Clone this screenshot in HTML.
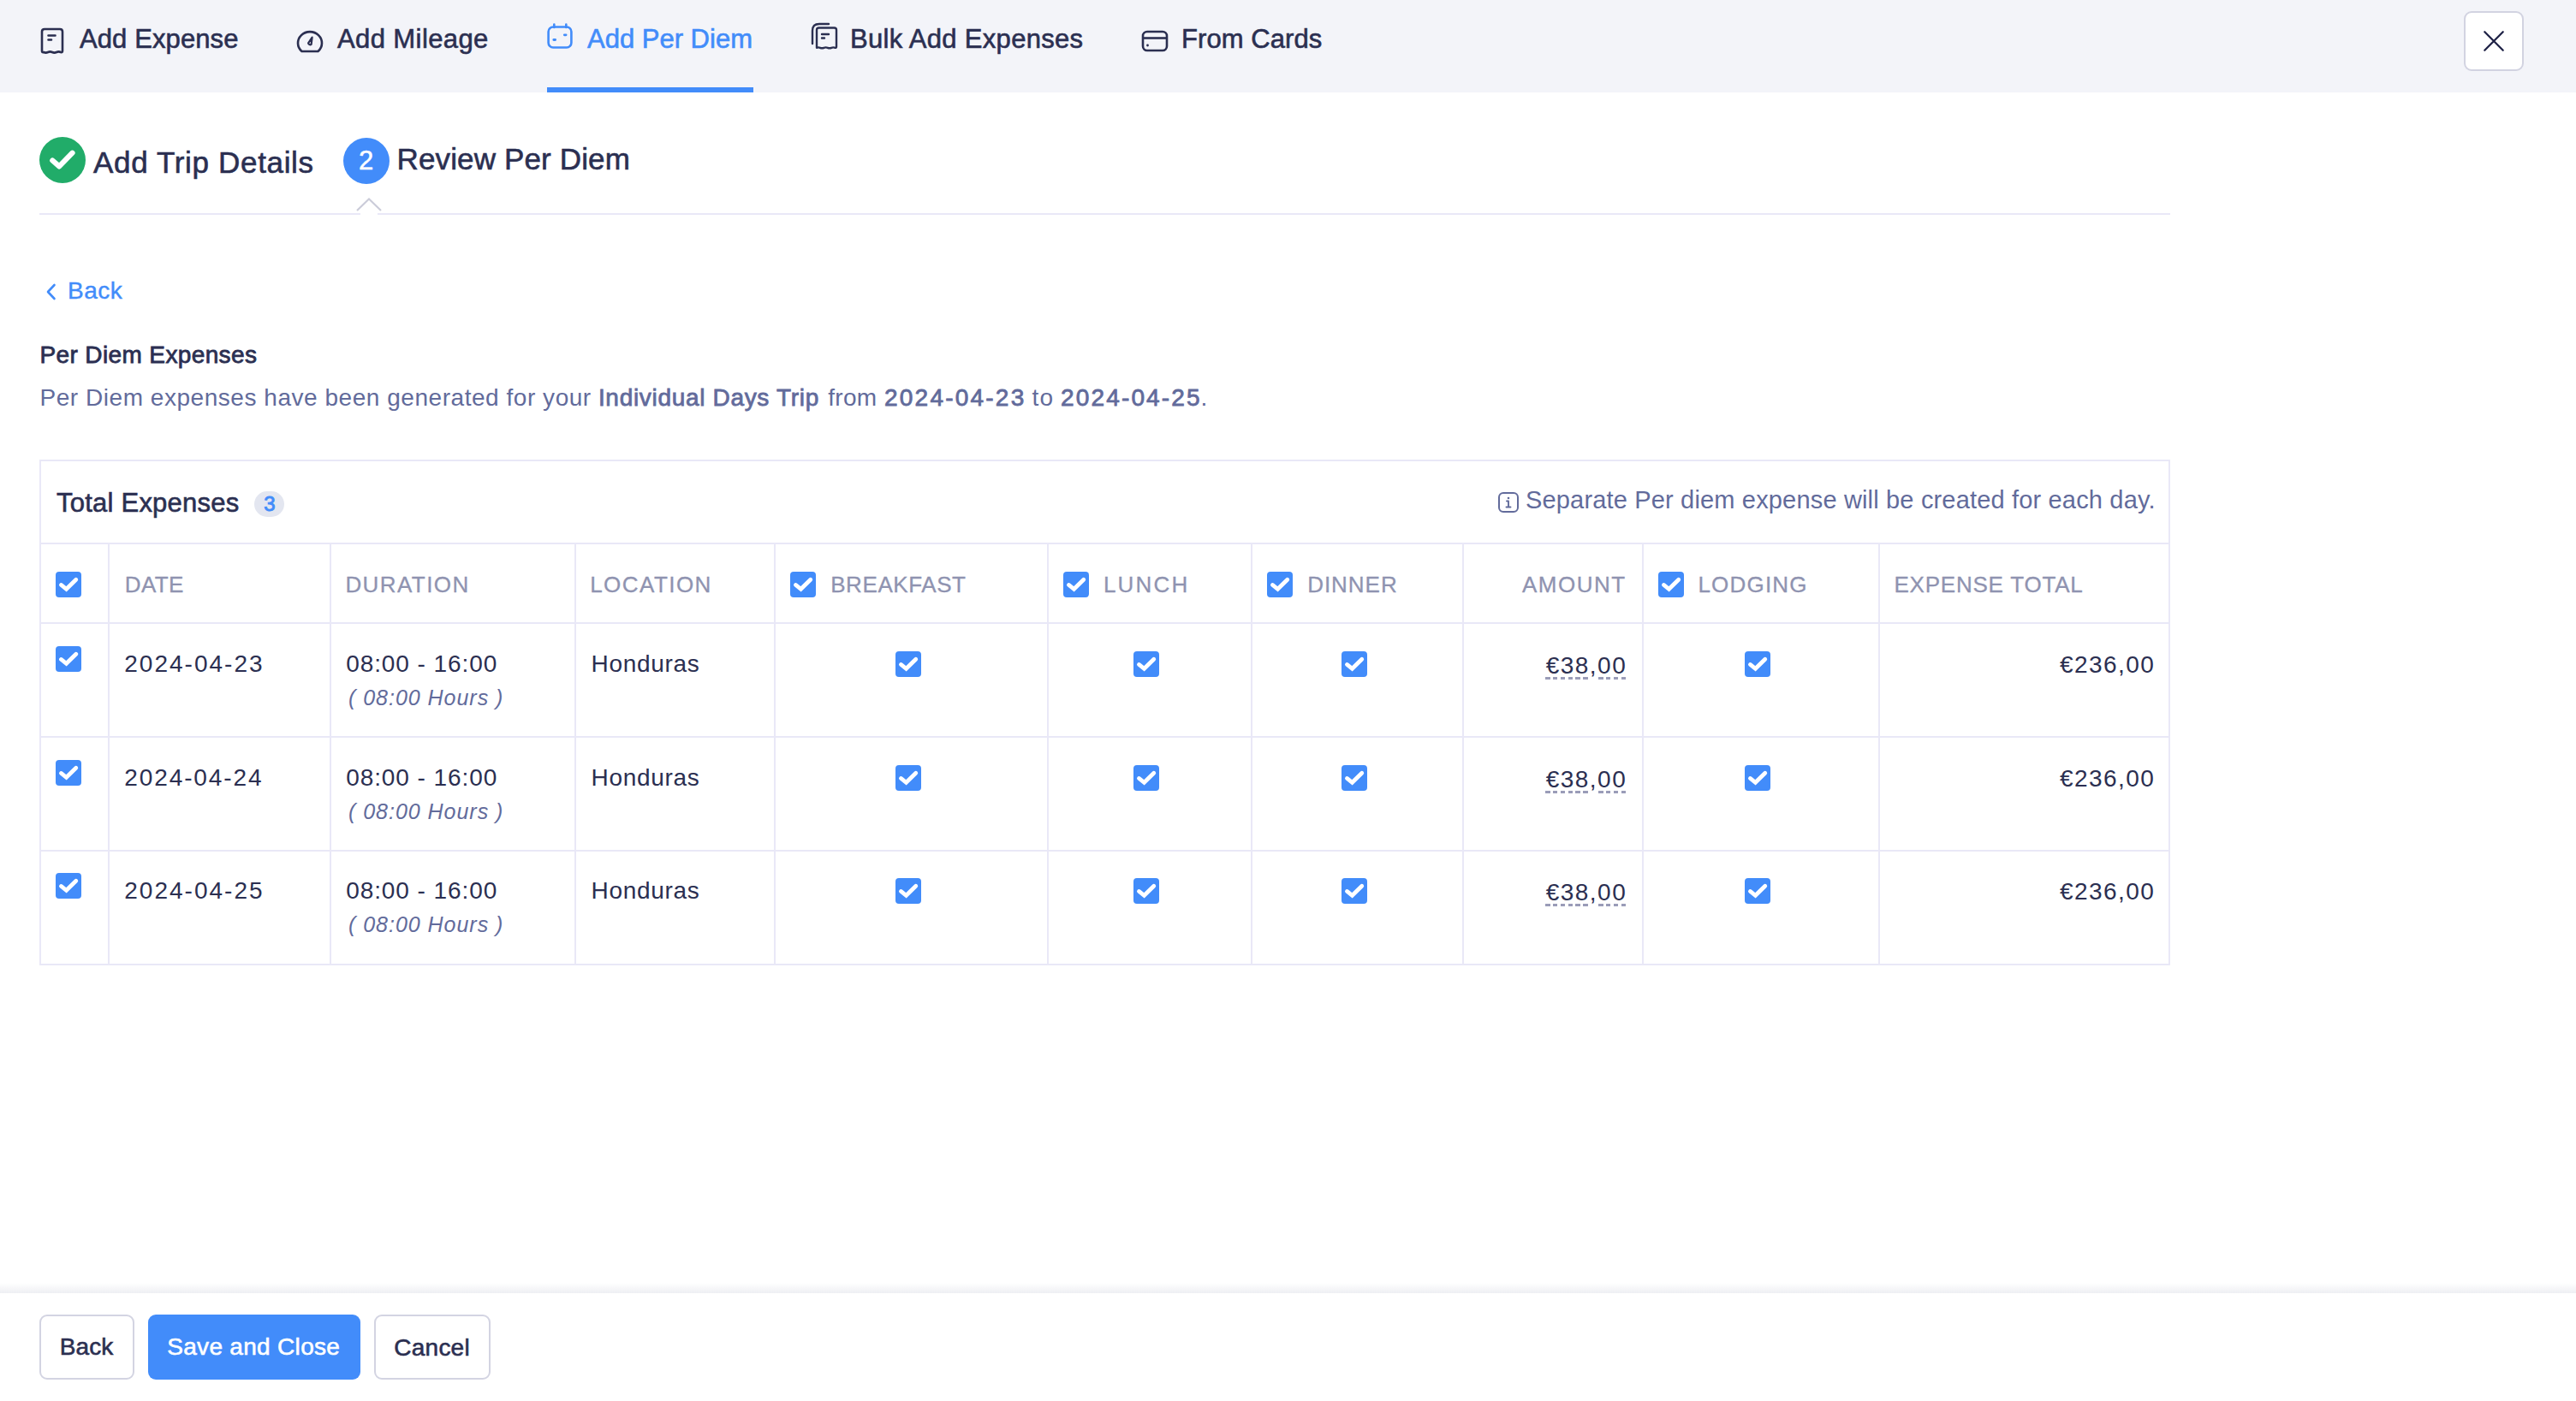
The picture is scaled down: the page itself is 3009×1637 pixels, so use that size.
<!DOCTYPE html>
<html><head><meta charset="utf-8"><title>Add Per Diem</title>
<style>
html,body{margin:0;padding:0;}
body{width:3009px;height:1637px;overflow:hidden;position:relative;background:#fff;font-family:"Liberation Sans",sans-serif;}
.tx{position:absolute;white-space:pre;line-height:1;}
.tx b{font-weight:700;}
.cb{position:absolute;width:30px;height:30px;border-radius:4px;background:#428cfa;}
.cb svg{position:absolute;left:0;top:0;}
.btn{position:absolute;top:1536px;height:72px;border:2px solid #d3d4e2;border-radius:9px;background:#fff;}
</style></head><body>
<div style="position:absolute;left:0;top:0;width:3009px;height:108px;background:#f3f4f9"></div>
<div style="position:absolute;left:639px;top:102px;width:241px;height:6px;background:#428cfa"></div>
<div style="position:absolute;left:2878px;top:13px;width:66px;height:66px;border:2px solid #d2d3e1;border-radius:9px;background:#fff"></div>
<svg style="position:absolute;left:2897px;top:32px" width="32" height="32" viewBox="0 0 32 32"><path d="M5.3 5.3 L26.7 26.7 M26.7 5.3 L5.3 26.7" stroke="#1f2246" stroke-width="2.3" stroke-linecap="round"/></svg>
<svg style="position:absolute;left:46px;top:31px" width="30" height="33" viewBox="0 0 30 33"><path d="M3 28.5 V6 Q3 3 6 3 H24 Q27 3 27 6 V28.5 Q27 30.5 25 30 Q22.5 28.8 20 30 Q17.5 31.3 15 30 Q12.5 28.8 10 30 Q7.5 31.3 5 30 Q3 30.5 3 28.5 Z" fill="none" stroke="#2b2f51" stroke-width="2.6" stroke-linejoin="round"/><path d="M10.5 10.5 H18.5 M10.5 15.5 H14" stroke="#2b2f51" stroke-width="2.6" stroke-linecap="round"/></svg>
<svg style="position:absolute;left:345px;top:33px" width="34" height="30" viewBox="0 0 34 30"><path d="M7.5 27 A14 13.2 0 1 1 26.5 27 Z" fill="none" stroke="#2b2f51" stroke-width="2.6" stroke-linejoin="round"/><path d="M19.6 10.6 L15.1 17.3 A2.3 2.3 0 0 0 18.6 18.9 Z" fill="none" stroke="#2b2f51" stroke-width="2.2" stroke-linejoin="round"/></svg>
<svg style="position:absolute;left:637px;top:25px" width="34" height="34" viewBox="0 0 34 34"><rect x="3.6" y="6.5" width="26.8" height="24" rx="5.5" fill="none" stroke="#428cfa" stroke-width="2.6"/><path d="M10.3 3.5 V7 M24.3 3.5 V7" stroke="#428cfa" stroke-width="2.6" stroke-linecap="round"/><path d="M9.8 21.5 H11.6 M22.3 15.8 H24.1" stroke="#428cfa" stroke-width="2.8" stroke-linecap="round"/></svg>
<svg style="position:absolute;left:946px;top:25px" width="34" height="34" viewBox="0 0 34 34"><path d="M8 29.5 V10 Q8 7.5 10.5 7.5 H28.5 Q31 7.5 31 10 V29.5 Q31 31 29.5 30.8 Q27.3 30 25.2 30.8 Q23 31.8 20.8 30.8 Q18.6 30 16.4 30.8 Q14.2 31.8 12 30.8 Q9.8 30 8 30.8 Z" fill="none" stroke="#2b2f51" stroke-width="2.4" stroke-linejoin="round"/><path d="M3 26 V11 Q3 3 11 3 H22" fill="none" stroke="#2b2f51" stroke-width="2.4" stroke-linecap="round"/><path d="M14 15 H22 M14 19.5 H17" stroke="#2b2f51" stroke-width="2.4" stroke-linecap="round"/></svg>
<svg style="position:absolute;left:1332px;top:34px" width="34" height="28" viewBox="0 0 34 28"><rect x="3" y="3" width="28" height="22" rx="5" fill="none" stroke="#2b2f51" stroke-width="2.6"/><path d="M3 10.5 H31" stroke="#2b2f51" stroke-width="2.6"/><circle cx="8.5" cy="19" r="1.4" fill="#2b2f51"/></svg>
<div style="position:absolute;left:46px;top:160px;width:54px;height:54px;border-radius:50%;background:#21ac69"></div>
<svg style="position:absolute;left:46px;top:160px" width="54" height="54" viewBox="0 0 54 54"><path d="M15.3 27.5 L23.2 34.4 L38.5 18.7" fill="none" stroke="#fff" stroke-width="6.2" stroke-linecap="round" stroke-linejoin="round"/></svg>
<div style="position:absolute;left:401px;top:161px;width:54px;height:54px;border-radius:50%;background:#428cfa"></div>
<div style="position:absolute;left:46px;top:249px;width:375px;height:2px;background:#e9e8f7"></div>
<div style="position:absolute;left:441px;top:249px;width:2094px;height:2px;background:#e9e8f7"></div>
<svg style="position:absolute;left:412px;top:228px" width="38" height="24" viewBox="0 0 38 24"><path d="M5 18 L19 4.5 L33 18" fill="none" stroke="#cbccd9" stroke-width="2.2"/></svg>
<svg style="position:absolute;left:52px;top:329px" width="16" height="24" viewBox="0 0 16 24"><path d="M11.5 4 L4 12 L11.5 20" fill="none" stroke="#428cfa" stroke-width="2.6" stroke-linecap="round" stroke-linejoin="round"/></svg>
<div style="position:absolute;left:46px;top:537px;width:2485px;height:587px;border:2px solid #e9e8f7;background:#fff"></div>
<div style="position:absolute;left:48px;top:634px;width:2485px;height:2px;background:#e9e8f7"></div>
<div style="position:absolute;left:48px;top:727px;width:2485px;height:2px;background:#e9e8f7"></div>
<div style="position:absolute;left:48px;top:860px;width:2485px;height:2px;background:#e9e8f7"></div>
<div style="position:absolute;left:48px;top:993px;width:2485px;height:2px;background:#e9e8f7"></div>
<div style="position:absolute;left:126px;top:636px;width:2px;height:490px;background:#e9e8f7"></div>
<div style="position:absolute;left:385px;top:636px;width:2px;height:490px;background:#e9e8f7"></div>
<div style="position:absolute;left:671px;top:636px;width:2px;height:490px;background:#e9e8f7"></div>
<div style="position:absolute;left:904px;top:636px;width:2px;height:490px;background:#e9e8f7"></div>
<div style="position:absolute;left:1223px;top:636px;width:2px;height:490px;background:#e9e8f7"></div>
<div style="position:absolute;left:1461px;top:636px;width:2px;height:490px;background:#e9e8f7"></div>
<div style="position:absolute;left:1708px;top:636px;width:2px;height:490px;background:#e9e8f7"></div>
<div style="position:absolute;left:1918px;top:636px;width:2px;height:490px;background:#e9e8f7"></div>
<div style="position:absolute;left:2194px;top:636px;width:2px;height:490px;background:#e9e8f7"></div>
<div style="position:absolute;left:297px;top:574px;width:35px;height:30px;border-radius:15px;background:#e3e6f0"></div>
<svg style="position:absolute;left:1749px;top:574px" width="26" height="26" viewBox="0 0 26 26"><rect x="2" y="2" width="22" height="22" rx="5" fill="none" stroke="#626b9b" stroke-width="2"/><path d="M13 11.5 V18.5 M10.5 18.5 H15.5 M11 11.5 H13" stroke="#626b9b" stroke-width="1.9" stroke-linecap="round"/><circle cx="13" cy="8" r="1.3" fill="#626b9b"/></svg>
<div class="cb" style="left:65px;top:668px"><svg width="30" height="30" viewBox="0 0 30 30"><path d="M6.4 15.4 L12.5 20.3 L23.8 9.2" fill="none" stroke="#fff" stroke-width="4.7" stroke-linecap="round" stroke-linejoin="miter"/></svg></div>
<div class="cb" style="left:923px;top:668px"><svg width="30" height="30" viewBox="0 0 30 30"><path d="M6.4 15.4 L12.5 20.3 L23.8 9.2" fill="none" stroke="#fff" stroke-width="4.7" stroke-linecap="round" stroke-linejoin="miter"/></svg></div>
<div class="cb" style="left:1242px;top:668px"><svg width="30" height="30" viewBox="0 0 30 30"><path d="M6.4 15.4 L12.5 20.3 L23.8 9.2" fill="none" stroke="#fff" stroke-width="4.7" stroke-linecap="round" stroke-linejoin="miter"/></svg></div>
<div class="cb" style="left:1480px;top:668px"><svg width="30" height="30" viewBox="0 0 30 30"><path d="M6.4 15.4 L12.5 20.3 L23.8 9.2" fill="none" stroke="#fff" stroke-width="4.7" stroke-linecap="round" stroke-linejoin="miter"/></svg></div>
<div class="cb" style="left:1937px;top:668px"><svg width="30" height="30" viewBox="0 0 30 30"><path d="M6.4 15.4 L12.5 20.3 L23.8 9.2" fill="none" stroke="#fff" stroke-width="4.7" stroke-linecap="round" stroke-linejoin="miter"/></svg></div>
<div class="cb" style="left:65px;top:755px"><svg width="30" height="30" viewBox="0 0 30 30"><path d="M6.4 15.4 L12.5 20.3 L23.8 9.2" fill="none" stroke="#fff" stroke-width="4.7" stroke-linecap="round" stroke-linejoin="miter"/></svg></div>
<div class="cb" style="left:1046px;top:761px"><svg width="30" height="30" viewBox="0 0 30 30"><path d="M6.4 15.4 L12.5 20.3 L23.8 9.2" fill="none" stroke="#fff" stroke-width="4.7" stroke-linecap="round" stroke-linejoin="miter"/></svg></div>
<div class="cb" style="left:1324px;top:761px"><svg width="30" height="30" viewBox="0 0 30 30"><path d="M6.4 15.4 L12.5 20.3 L23.8 9.2" fill="none" stroke="#fff" stroke-width="4.7" stroke-linecap="round" stroke-linejoin="miter"/></svg></div>
<div class="cb" style="left:1567px;top:761px"><svg width="30" height="30" viewBox="0 0 30 30"><path d="M6.4 15.4 L12.5 20.3 L23.8 9.2" fill="none" stroke="#fff" stroke-width="4.7" stroke-linecap="round" stroke-linejoin="miter"/></svg></div>
<div class="cb" style="left:2038px;top:761px"><svg width="30" height="30" viewBox="0 0 30 30"><path d="M6.4 15.4 L12.5 20.3 L23.8 9.2" fill="none" stroke="#fff" stroke-width="4.7" stroke-linecap="round" stroke-linejoin="miter"/></svg></div>
<div class="cb" style="left:65px;top:888px"><svg width="30" height="30" viewBox="0 0 30 30"><path d="M6.4 15.4 L12.5 20.3 L23.8 9.2" fill="none" stroke="#fff" stroke-width="4.7" stroke-linecap="round" stroke-linejoin="miter"/></svg></div>
<div class="cb" style="left:1046px;top:894px"><svg width="30" height="30" viewBox="0 0 30 30"><path d="M6.4 15.4 L12.5 20.3 L23.8 9.2" fill="none" stroke="#fff" stroke-width="4.7" stroke-linecap="round" stroke-linejoin="miter"/></svg></div>
<div class="cb" style="left:1324px;top:894px"><svg width="30" height="30" viewBox="0 0 30 30"><path d="M6.4 15.4 L12.5 20.3 L23.8 9.2" fill="none" stroke="#fff" stroke-width="4.7" stroke-linecap="round" stroke-linejoin="miter"/></svg></div>
<div class="cb" style="left:1567px;top:894px"><svg width="30" height="30" viewBox="0 0 30 30"><path d="M6.4 15.4 L12.5 20.3 L23.8 9.2" fill="none" stroke="#fff" stroke-width="4.7" stroke-linecap="round" stroke-linejoin="miter"/></svg></div>
<div class="cb" style="left:2038px;top:894px"><svg width="30" height="30" viewBox="0 0 30 30"><path d="M6.4 15.4 L12.5 20.3 L23.8 9.2" fill="none" stroke="#fff" stroke-width="4.7" stroke-linecap="round" stroke-linejoin="miter"/></svg></div>
<div class="cb" style="left:65px;top:1020px"><svg width="30" height="30" viewBox="0 0 30 30"><path d="M6.4 15.4 L12.5 20.3 L23.8 9.2" fill="none" stroke="#fff" stroke-width="4.7" stroke-linecap="round" stroke-linejoin="miter"/></svg></div>
<div class="cb" style="left:1046px;top:1026px"><svg width="30" height="30" viewBox="0 0 30 30"><path d="M6.4 15.4 L12.5 20.3 L23.8 9.2" fill="none" stroke="#fff" stroke-width="4.7" stroke-linecap="round" stroke-linejoin="miter"/></svg></div>
<div class="cb" style="left:1324px;top:1026px"><svg width="30" height="30" viewBox="0 0 30 30"><path d="M6.4 15.4 L12.5 20.3 L23.8 9.2" fill="none" stroke="#fff" stroke-width="4.7" stroke-linecap="round" stroke-linejoin="miter"/></svg></div>
<div class="cb" style="left:1567px;top:1026px"><svg width="30" height="30" viewBox="0 0 30 30"><path d="M6.4 15.4 L12.5 20.3 L23.8 9.2" fill="none" stroke="#fff" stroke-width="4.7" stroke-linecap="round" stroke-linejoin="miter"/></svg></div>
<div class="cb" style="left:2038px;top:1026px"><svg width="30" height="30" viewBox="0 0 30 30"><path d="M6.4 15.4 L12.5 20.3 L23.8 9.2" fill="none" stroke="#fff" stroke-width="4.7" stroke-linecap="round" stroke-linejoin="miter"/></svg></div>
<div style="position:absolute;left:1805px;top:791px;width:53px;height:2.6px;background:repeating-linear-gradient(to right,#9a9cb8 0 5.6px,transparent 5.6px 8.85px)"></div>
<div style="position:absolute;left:1866.5px;top:791px;width:33px;height:2.6px;background:repeating-linear-gradient(to right,#9a9cb8 0 5.6px,transparent 5.6px 8.85px)"></div>
<div style="position:absolute;left:1805px;top:924px;width:53px;height:2.6px;background:repeating-linear-gradient(to right,#9a9cb8 0 5.6px,transparent 5.6px 8.85px)"></div>
<div style="position:absolute;left:1866.5px;top:924px;width:33px;height:2.6px;background:repeating-linear-gradient(to right,#9a9cb8 0 5.6px,transparent 5.6px 8.85px)"></div>
<div style="position:absolute;left:1805px;top:1056px;width:53px;height:2.6px;background:repeating-linear-gradient(to right,#9a9cb8 0 5.6px,transparent 5.6px 8.85px)"></div>
<div style="position:absolute;left:1866.5px;top:1056px;width:33px;height:2.6px;background:repeating-linear-gradient(to right,#9a9cb8 0 5.6px,transparent 5.6px 8.85px)"></div>
<div style="position:absolute;left:0;top:1499px;width:3009px;height:12px;background:linear-gradient(to bottom, rgba(238,239,243,0), #eeeff3)"></div>
<div style="position:absolute;left:0;top:1511px;width:3009px;height:126px;background:#fff"></div>
<div class="btn" style="left:46px;width:107px"></div>
<div class="btn" style="left:173px;width:248px;border:none;height:76px;background:#428cfa"></div>
<div class="btn" style="left:437px;width:132px"></div>
<div id="t_exp" class="tx" style="left:93.00px;top:30.00px;font-size:31px;font-weight:400;color:#2b2f51;letter-spacing:0.100px;font-style:normal;-webkit-text-stroke:0.6px currentColor;">Add Expense</div>
<div id="t_mil" class="tx" style="left:394.00px;top:30.00px;font-size:31px;font-weight:400;color:#2b2f51;letter-spacing:0.400px;font-style:normal;-webkit-text-stroke:0.6px currentColor;">Add Mileage</div>
<div id="t_pd" class="tx" style="left:686.00px;top:30.00px;font-size:31px;font-weight:400;color:#428cfa;letter-spacing:0.000px;font-style:normal;-webkit-text-stroke:0.6px currentColor;">Add Per Diem</div>
<div id="t_bulk" class="tx" style="left:993.00px;top:30.21px;font-size:31px;font-weight:400;color:#2b2f51;letter-spacing:0.312px;font-style:normal;-webkit-text-stroke:0.6px currentColor;">Bulk Add Expenses</div>
<div id="t_card" class="tx" style="left:1380.00px;top:30.00px;font-size:31px;font-weight:400;color:#2b2f51;letter-spacing:0.069px;font-style:normal;-webkit-text-stroke:0.6px currentColor;">From Cards</div>
<div id="s_add" class="tx" style="left:109.00px;top:172.00px;font-size:35px;font-weight:400;color:#2b2f51;letter-spacing:0.667px;font-style:normal;-webkit-text-stroke:0.6px currentColor;">Add Trip Details</div>
<div id="s_two" class="tx" style="left:419.00px;top:172.00px;font-size:31px;font-weight:400;color:#ffffff;letter-spacing:0.000px;font-style:normal;-webkit-text-stroke:0.5px currentColor;">2</div>
<div id="s_rev" class="tx" style="left:463.50px;top:168.00px;font-size:35px;font-weight:400;color:#2b2f51;letter-spacing:0.143px;font-style:normal;-webkit-text-stroke:0.6px currentColor;">Review Per Diem</div>
<div id="back" class="tx" style="left:79.00px;top:325.80px;font-size:28px;font-weight:400;color:#428cfa;letter-spacing:0.466px;font-style:normal;-webkit-text-stroke:0.4px currentColor;">Back</div>
<div id="pde" class="tx" style="left:46.50px;top:400.71px;font-size:28px;font-weight:400;color:#2b2f51;letter-spacing:0.375px;font-style:normal;-webkit-text-stroke:0.8px currentColor;">Per Diem Expenses</div>
<div id="d1" class="tx" style="left:46.50px;top:450.80px;font-size:28px;font-weight:400;color:#626b9b;letter-spacing:0.538px;font-style:normal;">Per Diem expenses have been generated for your</div>
<div id="d2" class="tx" style="left:698.91px;top:450.80px;font-size:28px;font-weight:400;color:#626b9b;letter-spacing:0.684px;font-style:normal;-webkit-text-stroke:0.8px currentColor;">Individual Days Trip</div>
<div id="d3" class="tx" style="left:967.30px;top:450.80px;font-size:28px;font-weight:400;color:#626b9b;letter-spacing:0.266px;font-style:normal;">from</div>
<div id="d4" class="tx" style="left:1033.00px;top:450.80px;font-size:28px;font-weight:400;color:#626b9b;letter-spacing:2.222px;font-style:normal;-webkit-text-stroke:0.8px currentColor;">2024-04-23</div>
<div id="d5" class="tx" style="left:1205.41px;top:450.80px;font-size:28px;font-weight:400;color:#626b9b;letter-spacing:1.400px;font-style:normal;">to</div>
<div id="d6" class="tx" style="left:1239.00px;top:450.80px;font-size:28px;font-weight:400;color:#626b9b;letter-spacing:2.155px;font-style:normal;-webkit-text-stroke:0.8px currentColor;">2024-04-25</div>
<div id="d7" class="tx" style="left:1402.50px;top:450.80px;font-size:28px;font-weight:400;color:#626b9b;letter-spacing:0.000px;font-style:normal;">.</div>
<div id="tot" class="tx" style="left:66.00px;top:571.50px;font-size:31px;font-weight:400;color:#2b2f51;letter-spacing:0.231px;font-style:normal;-webkit-text-stroke:0.6px currentColor;">Total Expenses</div>
<div id="badge3" class="tx" style="left:308.21px;top:576.80px;font-size:24px;font-weight:400;color:#428cfa;letter-spacing:0.000px;font-style:normal;-webkit-text-stroke:0.9px currentColor;">3</div>
<div id="sep" class="tx" style="left:1782.00px;top:569.71px;font-size:29px;font-weight:400;color:#626b9b;letter-spacing:0.167px;font-style:normal;">Separate Per diem expense will be created for each day.</div>
<div id="h_date" class="tx" style="left:145.71px;top:670.30px;font-size:26px;font-weight:400;color:#8f93b0;letter-spacing:0.400px;font-style:normal;-webkit-text-stroke:0.3px currentColor;">DATE</div>
<div id="h_dur" class="tx" style="left:403.41px;top:670.30px;font-size:26px;font-weight:400;color:#8f93b0;letter-spacing:1.428px;font-style:normal;-webkit-text-stroke:0.3px currentColor;">DURATION</div>
<div id="h_loc" class="tx" style="left:689.21px;top:670.30px;font-size:26px;font-weight:400;color:#8f93b0;letter-spacing:1.459px;font-style:normal;-webkit-text-stroke:0.3px currentColor;">LOCATION</div>
<div id="h_bf" class="tx" style="left:970.21px;top:670.30px;font-size:26px;font-weight:400;color:#8f93b0;letter-spacing:0.572px;font-style:normal;-webkit-text-stroke:0.3px currentColor;">BREAKFAST</div>
<div id="h_lu" class="tx" style="left:1288.91px;top:670.30px;font-size:26px;font-weight:400;color:#8f93b0;letter-spacing:2.200px;font-style:normal;-webkit-text-stroke:0.3px currentColor;">LUNCH</div>
<div id="h_di" class="tx" style="left:1527.21px;top:670.30px;font-size:26px;font-weight:400;color:#8f93b0;letter-spacing:0.960px;font-style:normal;-webkit-text-stroke:0.3px currentColor;">DINNER</div>
<div id="h_am" class="tx" style="left:1778.00px;top:670.30px;font-size:26px;font-weight:400;color:#8f93b0;letter-spacing:1.480px;font-style:normal;-webkit-text-stroke:0.3px currentColor;">AMOUNT</div>
<div id="h_lo" class="tx" style="left:1983.41px;top:670.30px;font-size:26px;font-weight:400;color:#8f93b0;letter-spacing:1.200px;font-style:normal;-webkit-text-stroke:0.3px currentColor;">LODGING</div>
<div id="h_et" class="tx" style="left:2212.41px;top:670.30px;font-size:26px;font-weight:400;color:#8f93b0;letter-spacing:0.785px;font-style:normal;-webkit-text-stroke:0.3px currentColor;">EXPENSE TOTAL</div>
<div id="r0_date" class="tx" style="left:145.25px;top:762.00px;font-size:28px;font-weight:400;color:#2b2f51;letter-spacing:2.011px;font-style:normal;">2024-04-23</div>
<div id="r0_dur" class="tx" style="left:404.21px;top:762.00px;font-size:28px;font-weight:400;color:#2b2f51;letter-spacing:0.915px;font-style:normal;">08:00 - 16:00</div>
<div id="r0_hrs" class="tx" style="left:407.00px;top:802.61px;font-size:25px;font-weight:400;color:#626b9b;letter-spacing:0.972px;font-style:italic;">( 08:00 Hours )</div>
<div id="r0_loc" class="tx" style="left:690.61px;top:762.00px;font-size:28px;font-weight:400;color:#2b2f51;letter-spacing:0.670px;font-style:normal;">Honduras</div>
<div id="r0_amt" class="tx" style="left:1805.71px;top:763.80px;font-size:28px;font-weight:400;color:#2b2f51;letter-spacing:1.480px;font-style:normal;">€38,00</div>
<div id="r0_tot" class="tx" style="left:2406.00px;top:762.61px;font-size:28px;font-weight:400;color:#2b2f51;letter-spacing:1.433px;font-style:normal;">€236,00</div>
<div id="r1_date" class="tx" style="left:145.25px;top:895.00px;font-size:28px;font-weight:400;color:#2b2f51;letter-spacing:1.900px;font-style:normal;">2024-04-24</div>
<div id="r1_dur" class="tx" style="left:404.21px;top:895.00px;font-size:28px;font-weight:400;color:#2b2f51;letter-spacing:0.915px;font-style:normal;">08:00 - 16:00</div>
<div id="r1_hrs" class="tx" style="left:407.00px;top:935.61px;font-size:25px;font-weight:400;color:#626b9b;letter-spacing:0.972px;font-style:italic;">( 08:00 Hours )</div>
<div id="r1_loc" class="tx" style="left:690.61px;top:895.00px;font-size:28px;font-weight:400;color:#2b2f51;letter-spacing:0.670px;font-style:normal;">Honduras</div>
<div id="r1_amt" class="tx" style="left:1805.71px;top:896.80px;font-size:28px;font-weight:400;color:#2b2f51;letter-spacing:1.480px;font-style:normal;">€38,00</div>
<div id="r1_tot" class="tx" style="left:2406.00px;top:895.61px;font-size:28px;font-weight:400;color:#2b2f51;letter-spacing:1.433px;font-style:normal;">€236,00</div>
<div id="r2_date" class="tx" style="left:145.25px;top:1027.00px;font-size:28px;font-weight:400;color:#2b2f51;letter-spacing:2.011px;font-style:normal;">2024-04-25</div>
<div id="r2_dur" class="tx" style="left:404.21px;top:1027.00px;font-size:28px;font-weight:400;color:#2b2f51;letter-spacing:0.915px;font-style:normal;">08:00 - 16:00</div>
<div id="r2_hrs" class="tx" style="left:407.00px;top:1067.61px;font-size:25px;font-weight:400;color:#626b9b;letter-spacing:0.972px;font-style:italic;">( 08:00 Hours )</div>
<div id="r2_loc" class="tx" style="left:690.61px;top:1027.00px;font-size:28px;font-weight:400;color:#2b2f51;letter-spacing:0.670px;font-style:normal;">Honduras</div>
<div id="r2_amt" class="tx" style="left:1805.71px;top:1028.80px;font-size:28px;font-weight:400;color:#2b2f51;letter-spacing:1.480px;font-style:normal;">€38,00</div>
<div id="r2_tot" class="tx" style="left:2406.00px;top:1027.61px;font-size:28px;font-weight:400;color:#2b2f51;letter-spacing:1.433px;font-style:normal;">€236,00</div>
<div id="f_back" class="tx" style="left:69.80px;top:1560.21px;font-size:28px;font-weight:400;color:#2b2f51;letter-spacing:0.067px;font-style:normal;-webkit-text-stroke:0.6px currentColor;">Back</div>
<div id="f_save" class="tx" style="left:195.21px;top:1560.30px;font-size:28px;font-weight:400;color:#ffffff;letter-spacing:0.308px;font-style:normal;-webkit-text-stroke:0.6px currentColor;">Save and Close</div>
<div id="f_cancel" class="tx" style="left:460.30px;top:1560.50px;font-size:28px;font-weight:400;color:#2b2f51;letter-spacing:0.240px;font-style:normal;-webkit-text-stroke:0.6px currentColor;">Cancel</div>
</body></html>
